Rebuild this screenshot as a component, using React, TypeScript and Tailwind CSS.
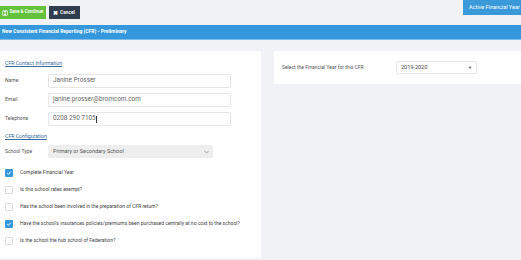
import React from "react";

function Check() {
  return (
    <div className="w-[8px] h-[8px] rounded-[1px] bg-[#3598dc] flex items-center justify-center">
      <svg width="6" height="6" viewBox="0 0 10 10">
        <path d="M2 5.2 L4.2 7.2 L8 2.8" stroke="white" strokeWidth="1.6" fill="none" />
      </svg>
    </div>
  );
}

function Box() {
  return <div className="w-[8px] h-[8px] rounded-[1px] border border-[#dcdcdc] bg-white" />;
}

export default function App() {
  const font = { fontFamily: "Roboto, 'Liberation Sans', sans-serif" };
  const checks: [boolean, string][] = [
    [true, "Complete Financial Year"],
    [false, "Is this school rates exempt?"],
    [false, "Has the school been involved in the preparation of CFR return?"],
    [true, "Have the school's insurances policies/premiums been purchased centrally at no cost to the school?"],
    [false, "Is the school the hub school of Federation?"],
  ];
  return (
    <div className="w-[521px] h-[260px] bg-[#f1f2f6] overflow-hidden flex flex-col" style={font}>
      <div className="h-[25px] flex justify-between items-start">
        <div className="flex gap-[3px] mt-[6px]">
          <div className="h-[13px] w-[46px] shrink-0 bg-[#63c23c] text-white text-[4.6px] font-semibold flex items-center gap-[1.5px] pl-[2px] whitespace-nowrap overflow-hidden">
            <svg width="6" height="6" viewBox="0 0 10 10" className="shrink-0">
              <rect x="1" y="1" width="8" height="8" rx="1" fill="none" stroke="white" strokeWidth="1.2" />
              <rect x="3" y="1.5" width="4" height="2.5" fill="white" />
              <rect x="3" y="6" width="4" height="2.5" fill="white" />
            </svg>
            <span>Save &amp; Continue</span>
          </div>
          <div className="h-[13px] w-[31px] shrink-0 bg-[#2f3d4f] text-white text-[4.8px] font-semibold flex items-center gap-[2px] pl-[4px] whitespace-nowrap overflow-hidden">
            <span className="text-[6px] leading-none">✖</span>
            <span>Cancel</span>
          </div>
        </div>
        <div className="h-[15px] w-[58px] bg-[#3a9ad9] text-white text-[5.5px] flex items-center pl-[6px] whitespace-nowrap overflow-hidden">
          Active Financial Year
        </div>
      </div>
      <div className="h-[15px] bg-[#3598dc] border-b border-[#7fbde8] text-white text-[5px] font-bold flex items-center pl-[2px]">
        New Consistent Financial Reporting (CFR) - Preliminary
      </div>
      <div className="h-[11px]" />
      <div className="flex gap-[13px] items-start">
        <div className="w-[261px] h-[207px] bg-white pl-[5px] pt-[10px] flex flex-col">
          <div className="text-[5.2px] text-[#3b6b9d] underline leading-none h-[6px]">CFR Contact Information</div>
          <div className="flex flex-col gap-[5px] mt-[7px]">
            {[
              ["Name", "Janine Prosser"],
              ["Email", "janine.prosser@bromcom.com"],
              ["Telephone", "0208 290 7105"],
            ].map(([l, v], i) => (
              <div key={l} className="flex items-center h-[14px]">
                <div className="w-[43px] text-[5px] text-[#555]">{l}</div>
                <div className="w-[183px] h-[14px] border border-[#e6e6e6] rounded-[2px] flex items-center pl-[4px] text-[6.4px] text-[#666]">
                  {v}
                  {i === 2 && <span className="w-[0.6px] h-[7px] bg-[#333] ml-[0.5px]" />}
                </div>
              </div>
            ))}
          </div>
          <div className="text-[5.2px] text-[#3b6b9d] underline leading-none h-[6px] mt-[8px]">CFR Configuration</div>
          <div className="flex items-center h-[13px] mt-[5px]">
            <div className="w-[43px] text-[5px] text-[#555]">School Type</div>
            <div className="w-[165px] h-[13px] bg-[#eeeeee] rounded-[2px] flex items-center justify-between pl-[5px] pr-[4px] text-[5.5px] text-[#555]">
              <span>Primary or Secondary School</span>
              <svg width="5" height="4" viewBox="0 0 10 6">
                <path d="M1 1 L5 5 L9 1" stroke="#777" strokeWidth="1.2" fill="none" />
              </svg>
            </div>
          </div>
          <div className="flex flex-col mt-[6px]">
            {checks.map(([c, t]) => (
              <div key={t} className="flex items-center h-[17px]">
                {c ? <Check /> : <Box />}
                <span className="ml-[7px] text-[5px] text-[#444]">{t}</span>
              </div>
            ))}
          </div>
        </div>
        <div className="flex-1 h-[33px] bg-white flex items-center pl-[8px]">
          <div className="w-[114px] text-[5px] text-[#555]">Select the Financial Year for this CFR</div>
          <div className="w-[81px] h-[13px] border border-[#e6e6e6] rounded-[2px] flex items-center justify-between pl-[4px] pr-[4px] text-[5.5px] text-[#444]">
            <span>2019-2020</span>
            <span className="text-[4px]">▼</span>
          </div>
        </div>
      </div>
    </div>
  );
}
